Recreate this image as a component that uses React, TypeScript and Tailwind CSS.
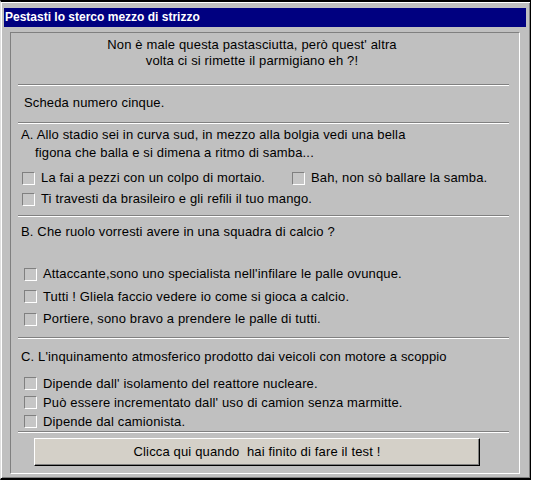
import React from 'react';

const font = { fontFamily: '"Liberation Sans", Arial, sans-serif' };

const Box: React.FC = () => (
  <span className="inline-block w-[13px] h-[13px] shrink-0 border border-t-[#808080] border-l-[#808080] border-b-white border-r-white bg-[#c6c6c6]" />
);

const Option: React.FC<{ label: string; className?: string }> = ({ label, className = '' }) => (
  <div className={`flex items-center gap-[6px] ${className}`}>
    <Box />
    <span>{label}</span>
  </div>
);

const Separator: React.FC<{ className?: string }> = ({ className = '' }) => (
  <div className={`ml-[7px] mr-[10px] h-[2px] border-t border-t-[#808080] border-b border-b-white ${className}`} />
);

const App: React.FC = () => {
  return (
    <div className="bg-white w-[533px] h-[483px]" style={font}>
      <div className="w-[531px] h-[480px] bg-[#c0c0c0] border-t-2 border-t-black border-l border-l-[#dfdfdf] border-r border-r-black border-b-2 border-b-black shadow-[inset_1px_1px_#ffffff,inset_-1px_-1px_#808080] pl-[3px] pr-[4px] pt-[6px]">
        <div className="h-[19px] bg-[#000080] text-white font-bold text-[12px] leading-[19px] pl-[1px]">
          Pestasti lo sterco mezzo di strizzo
        </div>

        <div className="mt-[5px] mx-[6px] h-[442px] border border-t-[#808080] border-l-[#808080] border-b-white border-r-white text-[13px] tracking-[0.15px] text-black">
          <div className="mt-[4px] pr-[26px] text-center leading-[16px]">
            Non è male questa pastasciutta, però quest' altra
            <br />
            volta ci si rimette il parmigiano eh ?!
          </div>

          <Separator className="mt-[15px]" />

          <div className="mt-[9px] ml-[13px] leading-[16px]">Scheda numero cinque.</div>

          <Separator className="mt-[11px]" />

          <div className="mt-[2px] ml-[10px] leading-[18px]">
            <div>A. Allo stadio sei in curva sud, in mezzo alla bolgia vedi una bella</div>
            <div className="pl-[14px]">figona che balla e si dimena a ritmo di samba...</div>
          </div>
          <div className="mt-[6px] ml-[11px] h-[20px] flex items-center">
            <Option label="La fai a pezzi con un colpo di mortaio." className="w-[270px]" />
            <Option label="Bah, non sò ballare la samba." />
          </div>
          <div className="mt-[1px] ml-[11px] h-[20px] flex items-center">
            <Option label="Ti travesti da brasileiro e gli refili il tuo mango." />
          </div>

          <Separator className="mt-[6px]" />

          <div className="mt-[7px] ml-[10px] leading-[16px]">B. Che ruolo vorresti avere in una squadra di calcio ?</div>
          <div className="mt-[23px] ml-[13px] flex flex-col">
            <Option label="Attaccante,sono uno specialista nell'infilare le palle ovunque." className="h-[22px]" />
            <Option label="Tutti ! Gliela faccio vedere io come si gioca a calcio." className="h-[23px]" />
            <Option label="Portiere, sono bravo a prendere le palle di tutti." className="h-[22px]" />
          </div>

          <Separator className="mt-[7px]" />

          <div className="mt-[10px] ml-[10px] leading-[16px]">C. L'inquinamento atmosferico prodotto dai veicoli con motore a scoppio</div>
          <div className="mt-[9px] ml-[13px] flex flex-col">
            <Option label="Dipende dall' isolamento del reattore nucleare." className="h-[19px]" />
            <Option label="Può essere incrementato dall' uso di camion senza marmitte." className="h-[19px]" />
            <Option label="Dipende dal camionista." className="h-[19px]" />
          </div>

          <Separator />

          <button className="mt-[5px] ml-[23px] w-[446px] h-[28px] bg-[#d4d0c8] border border-t-white border-l-white border-b-black border-r-black shadow-[inset_-1px_-1px_#808080] text-[13px] tracking-[0.15px] text-black whitespace-pre">
            Clicca qui quando  hai finito di fare il test !
          </button>
        </div>
      </div>
    </div>
  );
};

export default App;
